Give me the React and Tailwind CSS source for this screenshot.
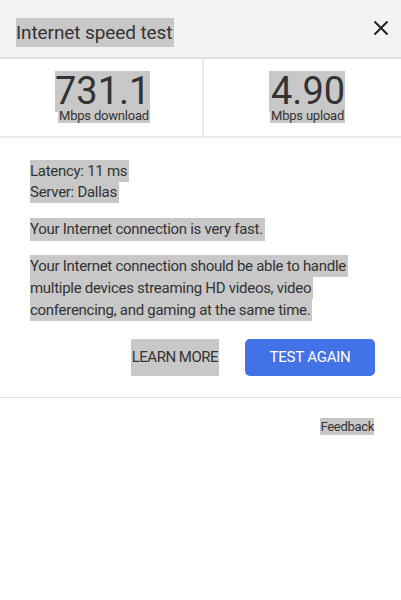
import React from "react";

const Hl = ({ children, className = "" }) => (
  <span className={`block w-fit bg-[#c8c8c8] ${className}`}>{children}</span>
);

export default function App() {
  return (
    <div className="w-[401px] h-[600px] bg-white text-[#333] font-['Roboto',sans-serif]">
      {/* header */}
      <div className="h-[59px] bg-[#f1f3f4] border-b-2 border-[#dfe1e5] flex items-start justify-between pl-4 pr-3 pt-[18px]">
        <Hl className="text-[19px] leading-[29px] tracking-[-0.1px] pr-[2px]">Internet speed test</Hl>
        <svg width="16" height="16" viewBox="0 0 16 16" className="mt-[2px]">
          <path d="M1.5 1.5 L14.5 14.5 M14.5 1.5 L1.5 14.5" stroke="#222" strokeWidth="2" />
        </svg>
      </div>

      {/* stats */}
      <div className="flex h-[79px] border-b-2 border-[#e8eaed]">
        <div className="w-[204px] pl-[55px] pt-[12px] border-r-2 border-[#e8eaed]">
          <Hl className="text-[38px] leading-[41px] w-[103px]">731.1</Hl>
          <Hl className="text-[13px] leading-[14px] -mt-[3px] ml-[3px] px-[1px] tracking-[-0.2px]">Mbps download</Hl>
        </div>
        <div className="flex-1 pl-[65px] pt-[12px]">
          <Hl className="text-[38px] leading-[41px] w-[83px] pl-[2px]">4.90</Hl>
          <Hl className="text-[13px] leading-[14px] -mt-[3px] ml-[1px] px-[1px] tracking-[-0.2px]">Mbps upload</Hl>
        </div>
      </div>

      {/* details */}
      <div className="px-[30px] pt-[22px] text-[15px] tracking-[-0.28px]">
        <div>
          <Hl className="leading-[22px] pr-[2px]">Latency: 11 ms</Hl>
          <Hl className="leading-[21px] pr-[2px]">Server: Dallas</Hl>
        </div>
        <Hl className="mt-[15px] leading-[23px] pr-[2px]">Your Internet connection is very fast.</Hl>
        <div className="mt-[14px]">
          <Hl className="leading-[22px] pr-[2px]">Your Internet connection should be able to handle</Hl>
          <Hl className="leading-[22px] pr-[2px]">multiple devices streaming HD videos, video</Hl>
          <Hl className="leading-[22px] pr-[2px]">conferencing, and gaming at the same time.</Hl>
        </div>
        <div className="mt-[18px] flex justify-end items-center gap-[26px] -mr-[4px]">
          <span className="bg-[#c8c8c8] h-[37px] px-[1px] flex items-center text-[15px] uppercase tracking-[-0.5px]">
            Learn more
          </span>
          <button className="h-[37px] w-[130px] rounded-[5px] bg-[#4372e6] text-white text-[15px] uppercase tracking-[-0.2px]">
            Test again
          </button>
        </div>
      </div>

      <div className="mt-[21px] border-t border-[#e0e0e0]" />

      <div className="flex justify-end pr-[27px] pt-[20px]">
        <Hl className="text-[13px] leading-[17px] tracking-[-0.3px]">Feedback</Hl>
      </div>
    </div>
  );
}
